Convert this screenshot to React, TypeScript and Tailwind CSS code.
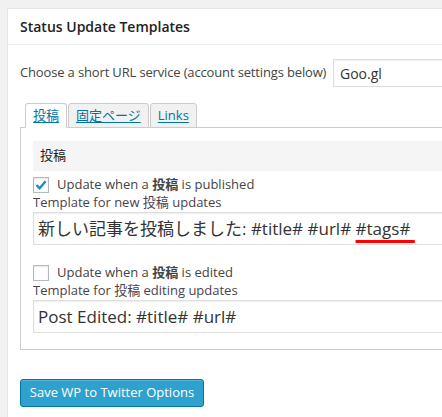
import React from 'react'

const font = { fontFamily: '"Open Sans", "Noto Sans CJK JP", sans-serif' }

function Checkbox({ checked }: { checked?: boolean }) {
  return (
    <span className="w-[16px] h-[16px] border border-[#b4b9be] bg-white shadow-[inset_0_1px_2px_rgba(0,0,0,0.1)] flex items-center justify-center shrink-0">
      {checked && (
        <svg width="14" height="14" viewBox="0 0 14 14">
          <path d="M2.5 7.2 L5.6 10.2 L11.6 3.2" fill="none" stroke="#1e8cbe" strokeWidth="2.4" />
        </svg>
      )}
    </span>
  )
}

function TemplateField({
  checked,
  action,
  label,
  children,
}: {
  checked?: boolean
  action: string
  label: string
  children: React.ReactNode
}) {
  return (
    <div>
      <label className="flex items-center gap-[8px] h-[17px]">
        <Checkbox checked={checked} />
        <span className="text-[13px] text-[#444]">
          Update when a <b className="font-semibold">投稿</b> is {action}
        </span>
      </label>
      <p className="text-[13px] leading-[19px] text-[#4b3f4f]">{label}</p>
      <div className="h-[33px] border border-[#ddd] shadow-[inset_0_1px_2px_rgba(0,0,0,0.07)] bg-white flex items-center px-[4px] text-[17px] text-[#333]">
        <span className="whitespace-nowrap">{children}</span>
      </div>
    </div>
  )
}

export default function App() {
  return (
    <div className="w-[442px] h-[417px] overflow-hidden bg-[#f1f1f1] pt-[8px] pl-[7px]" style={font}>
      <div className="w-[480px] h-[420px] bg-white border border-[#e5e5e5]">
        <div className="h-[36px] border-b border-[#eee] px-[12px] flex items-center">
          <h2 className="text-[14px] font-semibold text-[#222]">Status Update Templates</h2>
        </div>

        <div className="px-[12px]">
          <div className="mt-[14px] flex items-center gap-[6px]">
            <span className="w-[307px] shrink-0 whitespace-nowrap text-[13px] tracking-[-0.15px] text-[#444]">
              Choose a short URL service (account settings below)
            </span>
            <div className="w-[160px] h-[28px] border border-[#ddd] shadow-[inset_0_1px_2px_rgba(0,0,0,0.07)] flex items-center px-[6px] text-[14px] text-[#333]">
              Goo.gl
            </div>
          </div>

          <div className="mt-[16px] flex pl-[5px] gap-[1px] relative z-10">
            {['投稿', '固定ページ', 'Links'].map((t, i) => (
              <div
                key={t}
                className={`h-[25px] px-[7px] border border-[#ccc] rounded-t-[3px] flex items-center text-[13px] text-[#0074a2] underline underline-offset-[2px] ${
                  i === 0 ? 'bg-white border-b-white' : 'bg-[#f1f1f1]'
                }`}
              >
                {t}
              </div>
            ))}
          </div>

          <div className="-mt-[1px] border border-[#ccc] px-[12px] pt-[13px] pb-[16px]">
            <div className="h-[30px] bg-[#f5f5f5] flex items-center px-[7px] text-[13px] text-[#222]">投稿</div>

            <div className="mt-[5px]">
              <TemplateField checked action="published" label="Template for new 投稿 updates">
                新しい記事を投稿しました: #title# #url#{' '}
                <span className="underline decoration-[#f00] decoration-[3px] underline-offset-[5px]">#tags#&nbsp;</span>
              </TemplateField>
            </div>

            <div className="mt-[19px]">
              <TemplateField action="edited" label="Template for 投稿 editing updates">
                Post Edited: #title# #url#
              </TemplateField>
            </div>
          </div>

          <button className="mt-[29px] w-[184px] h-[28px] bg-[#2ea2cc] border border-[#0074a2] rounded-[3px] shadow-[inset_0_1px_0_rgba(120,200,230,0.5)] text-white text-[13px]">
            Save WP to Twitter Options
          </button>
        </div>
      </div>
    </div>
  )
}
